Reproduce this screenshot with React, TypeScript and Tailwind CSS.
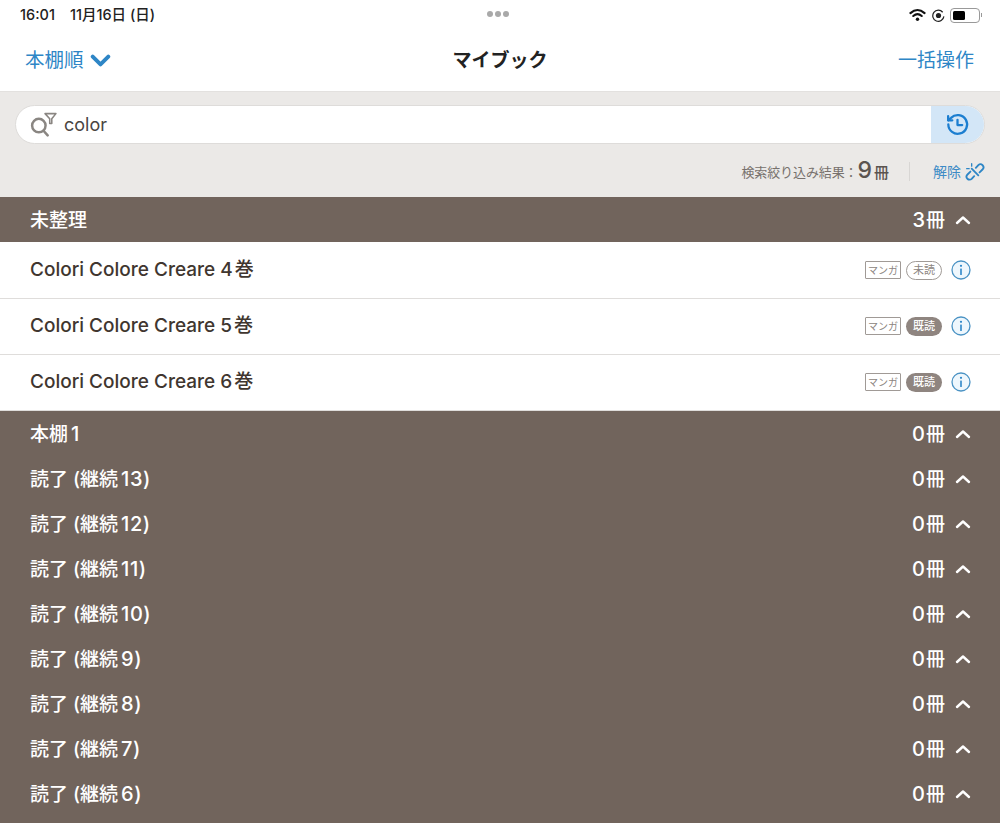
import React from "react";

const FONT = "font-['Inter','Noto_Sans_CJK_JP',sans-serif]";

function Chevron({ up, className }: { up?: boolean; className?: string }) {
  return (
    <svg viewBox="0 0 16 10" className={className} fill="none" stroke="currentColor" strokeWidth={up ? 2.4 : 3} strokeLinecap="round" strokeLinejoin="round">
      {up ? <path d="M2 8 L8 2.5 L14 8" /> : <path d="M2 2 L8 8 L14 2" />}
    </svg>
  );
}

function Header({ name, num, after, count }: { name: string; num?: string; after?: string; count: string }) {
  return (
    <div className="flex h-[45px] items-center justify-between pt-[1px] pl-[30px] pr-[29px] text-white">
      <span className="text-[19px] font-medium leading-none">
        {name}
        {num ? <span className="ml-[3px] text-[20px] tracking-[0.5px]">{num}</span> : null}
        {after ? <span className="text-[20px]">{after}</span> : null}
      </span>
      <div className="flex items-center">
        <span className="text-[20px] font-medium leading-none">{count}</span>
        <span className="ml-[1px] text-[19px] font-medium leading-none">冊</span>
        <Chevron up className="ml-[10px] h-[10px] w-[16px]" />
      </div>
    </div>
  );
}

function Book({ title, num, read }: { title: string; num: string; read: boolean }) {
  return (
    <div className="flex h-[56px] items-center justify-between border-b border-[#dfdddb] bg-white pb-[1px] pl-[30px] pr-[29px] last:h-[55px] last:border-b-0">
      <span className="mb-[2px] text-[19px] font-medium leading-none text-[#40362f]">
        {title}
        <span className="ml-[5px]">{num}</span>
        <span className="ml-[2px]">巻</span>
      </span>
      <div className="flex items-center">
        <span className="flex h-[18px] w-[36px] items-center justify-center rounded-[1px] border border-[#a09a96] text-[10px] leading-none text-[#8b8480]">マンガ</span>
        {read ? (
          <span className="ml-[5px] flex h-[19px] w-[36px] items-center justify-center rounded-full bg-[#8f8580] text-[11px] font-medium leading-none text-white">既読</span>
        ) : (
          <span className="ml-[5px] flex h-[19px] w-[36px] items-center justify-center rounded-full border border-[#a09a96] text-[11px] leading-none text-[#8b8480]">未読</span>
        )}
        <svg viewBox="0 0 20 20" className="ml-[9px] h-[20px] w-[20px]">
          <circle cx="10" cy="10" r="9" fill="#eef7fd" stroke="#4b93c4" strokeWidth="1.3" />
          <circle cx="10" cy="5.8" r="1.1" fill="#2d86c8" />
          <rect x="9.2" y="8.5" width="1.6" height="6.5" rx="0.5" fill="#2d86c8" />
        </svg>
      </div>
    </div>
  );
}

export default function App() {
  const shelves: [string, string, string][] = [
    ["本棚", "1", ""],
    ["読了 (継続", "13", ")"],
    ["読了 (継続", "12", ")"],
    ["読了 (継続", "11", ")"],
    ["読了 (継続", "10", ")"],
    ["読了 (継続", "9", ")"],
    ["読了 (継続", "8", ")"],
    ["読了 (継続", "7", ")"],
    ["読了 (継続", "6", ")"],
  ];
  return (
    <div className={`${FONT} h-[823px] w-[1000px] overflow-hidden bg-[#71645c]`}>
      <div className="h-[91px] bg-white">
        <div className="relative flex h-[30px] items-center justify-between pl-[20px] pr-[18px] text-[#222]">
          <div className="flex items-center text-[14.5px] font-medium leading-none">
            <span>16:01</span>
            <span className="ml-[15px]">11月16日 (日)</span>
          </div>
          <div className="absolute left-[487px] top-[11px] flex gap-[2px]">
            <span className="h-[6px] w-[6px] rounded-full bg-[#a9a9a9]" />
            <span className="h-[6px] w-[6px] rounded-full bg-[#a9a9a9]" />
            <span className="h-[6px] w-[6px] rounded-full bg-[#a9a9a9]" />
          </div>
          <div className="flex items-center">
            <svg viewBox="0 0 18 14" className="h-[14px] w-[17px]" fill="none" stroke="#111" strokeLinecap="round">
              <path d="M1.5 5 Q9 -1.5 16.5 5" strokeWidth="2.2" />
              <path d="M4.5 8 Q9 4 13.5 8" strokeWidth="2.2" />
              <circle cx="9" cy="11.5" r="1.8" fill="#111" stroke="none" />
            </svg>
            <svg viewBox="0 0 14 14" className="ml-[6px] h-[13px] w-[13px]" fill="none" stroke="#222" strokeWidth="1.3">
              <path d="M11.5 3.5 A6 6 0 1 0 12.8 8" />
              <circle cx="7" cy="7" r="2.8" fill="#222" stroke="none" />
            </svg>
            <div className="ml-[5px] flex h-[15px] w-[30px] items-center rounded-[4px] border border-[#999] p-[2px]">
              <div className="h-full w-[12px] rounded-[1.5px] bg-black" />
            </div>
            <div className="ml-[1px] h-[4px] w-[1px] bg-[#999]" />
          </div>
        </div>
        <div className="relative flex h-[61px] items-center justify-between pl-[25px] pr-[26px]">
          <div className="flex items-center text-[#2e86c6]">
            <span className="text-[19.5px] leading-none">本棚順</span>
            <Chevron className="ml-[6px] h-[13px] w-[21px]" />
          </div>
          <span className="absolute left-0 right-0 pb-[1px] text-center text-[19px] font-bold leading-none text-[#222]">マイブック</span>
          <span className="text-[19px] leading-none text-[#2e86c6]">一括操作</span>
        </div>
      </div>

      <div className="h-[106px] border-t border-[#e3e1df] bg-[#ebe9e7] px-[15px] pt-[13px]">
        <div className="flex h-[39px] overflow-hidden rounded-full border border-[#dedcda] bg-white">
          <div className="flex flex-1 items-center pl-[14px]">
            <svg viewBox="0 0 28 24" className="-ml-[1px] h-[25px] w-[29px]" fill="none" stroke="#8a8682" strokeWidth="2.4">
              <circle cx="9.5" cy="13" r="6.5" />
              <path d="M14 18 L18 22.5" strokeLinecap="round" />
              <path d="M15.5 1.5 H26 L22 6.5 V11 H20 V6.5 Z" strokeWidth="1.5" strokeLinejoin="round" />
            </svg>
            <span className="ml-[6px] text-[18px] leading-none text-[#4a4542]">color</span>
          </div>
          <div className="flex w-[53px] items-center justify-center bg-[#d3e6f7]">
            <svg viewBox="0 0 24 24" className="h-[25px] w-[25px]" fill="none" stroke="#1c7ed0" strokeWidth="2.2" strokeLinecap="round" strokeLinejoin="round">
              <path d="M3.2 12 A9 9 0 1 0 5.8 5.6 L3 8" />
              <path d="M3 4 V8 H7" />
              <path d="M12 7.5 V12.5 H16.5" />
            </svg>
          </div>
        </div>
        <div className="mt-[15px] flex items-center justify-end">
          <span className="mt-[2px] text-[13px] leading-none tracking-[-0.1px] text-[#77716d]">検索絞り込み結果：</span>
          <span className="mb-[2px] text-[23px] font-medium leading-none text-[#5b5450]">9</span>
          <span className="ml-[2px] mt-[2px] text-[15px] font-medium leading-none text-[#5b5450]">冊</span>
          <div className="ml-[20px] h-[19px] w-px bg-[#d8d6d4]" />
          <span className="ml-[23px] text-[14px] leading-none text-[#3d8bc6]">解除</span>
          <svg viewBox="0 0 24 24" className="ml-[4px] h-[20px] w-[20px]" fill="none" stroke="#2e86c6" strokeWidth="2.2" strokeLinecap="round" strokeLinejoin="round">
            <path d="M13 7 L16 3.8 A3.6 3.6 0 0 1 21 9 L17.5 12.5" />
            <path d="M11 17 L8 20.2 A3.6 3.6 0 0 1 3 15 L6.5 11.5" />
            <path d="M8 8 L16 16" />
            <path d="M8 2 V5 M2 8 H5" strokeWidth="1.6" />
          </svg>
        </div>
      </div>

      <Header name="未整理" count="3" />
      <div className="border-b border-[#dfdddb] bg-white pt-[1px]">
        <Book title="Colori Colore Creare" num="4" read={false} />
        <Book title="Colori Colore Creare" num="5" read />
        <Book title="Colori Colore Creare" num="6" read />
      </div>
      {shelves.map((s) => (
        <Header key={s[0] + s[1]} name={s[0]} num={s[1]} after={s[2]} count="0" />
      ))}
    </div>
  );
}
